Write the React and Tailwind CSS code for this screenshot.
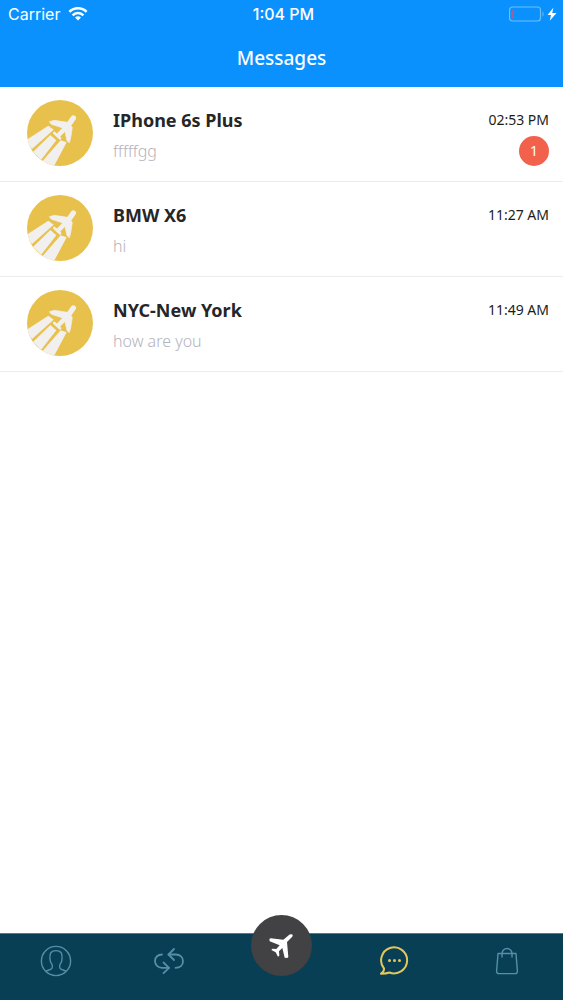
import React, { useState } from "react";

const CHATS = [
  { id: 1, title: "IPhone 6s Plus", text: "fffffgg", time: "02:53 PM", unread: 1 },
  { id: 2, title: "BMW X6", text: "hi", time: "11:27 AM", unread: 0 },
  { id: 3, title: "NYC-New York", text: "how are you", time: "11:49 AM", unread: 0 },
];

function WifiIcon() {
  return (
    <svg viewBox="0 0 20 14" className="w-5 h-3.5" fill="none" stroke="white" strokeWidth="2.6" aria-hidden="true">
      <path d="M1.4 4.800a12.200 12.200 0 0 1 17.200 0" />
      <path d="M4.600 8.300a7.600 7.600 0 0 1 10.800 0" />
      <path d="M10 13.600 7 10.600a4.300 4.300 0 0 1 6 0z" fill="white" stroke="none" />
    </svg>
  );
}

function BatteryIcon() {
  return (
    <svg viewBox="0 0 50 16" className="w-[50px] h-4" fill="none" aria-hidden="true">
      <rect x="0.5" y="1" width="31" height="14" rx="3" stroke="#6cc0f5" strokeWidth="1.2" />
      <path d="M33.500 5.500c1.400.5 1.400 4.500 0 5z" fill="#6cc0f5" />
      <rect x="2.500" y="3.500" width="2.500" height="9" rx="1" fill="#a0609c" />
      <path d="M44.500 1.500 38.500 9H42l-1.200 5.800L47.500 7H43.200z" fill="white" />
    </svg>
  );
}

function Avatar() {
  return (
    <svg viewBox="0 0 198 198" className="w-[66px] h-[66px] shrink-0 rounded-full bg-[#e8c04c]" aria-hidden="true">
      <g fill="#f1f0ee">
        <path d="M64 77 80 89 15 147 -6 122z" />
        <path d="M70 105 88 121 42 180 18 156z" />
        <path d="M101 121 119 127 78 204 46 184z" />
        <path d="M122 67 82 61 67 65 73 73 105 83 114 95 120 122 127 128 131 114 136 82z" stroke="#f1f0ee" strokeWidth="2" strokeLinejoin="round" />
      </g>
      <g fill="none" stroke="#f1f0ee" strokeLinecap="round">
        <path d="M139 54 126 73" strokeWidth="16" />
        <path d="M126 73 95 105" strokeWidth="14" />
        <path d="M82 99 99 115" strokeWidth="8" />
      </g>
    </svg>
  );
}

function ProfileIcon() {
  return (
    <svg viewBox="0 0 32 32" className="w-8 h-8" fill="none" stroke="currentColor" strokeWidth="1.4" aria-hidden="true">
      <circle cx="16" cy="16" r="14.6" />
      <path d="M5.500 26.400c2.400-1.300 5.800-1.600 6.600-3.400.6-1.400.3-2.800-.3-4-1.200-1.500-1.700-3-1.800-4.800C9.500 8.800 10.500 5.600 16 5.600s6.500 3.200 6 8.600c-.1 1.800-.6 3.300-1.800 4.800-.6 1.200-.9 2.600-.3 4 .8 1.800 4.200 2.100 6.600 3.400" />
    </svg>
  );
}

function ExchangeIcon() {
  return (
    <svg viewBox="0 0 32 28" className="w-8 h-7" fill="none" stroke="currentColor" strokeWidth="1.8" strokeLinecap="round" strokeLinejoin="round" aria-hidden="true">
      <path d="M9 7.500C5 7.500 2 10 2 14s3 6.800 7 6.800h7" />
      <path d="M10.500 15.500 16 20.800l-5.500 5.400" />
      <path d="M22.500 20.800c4.500 0 7.500-2.600 7.500-6.600s-3-6.700-7-6.700h-7.500" />
      <path d="M21 2l-5.500 5.500L21 13" />
    </svg>
  );
}

function PlaneIcon() {
  return (
    <svg viewBox="0 0 72 72" className="w-6 h-6" fill="white" aria-hidden="true">
      <path d="M68 1c4 1 4 5 1 8L54 24l4 45-3 3-8-1-7-29-10 10 1 13-4 3-7-13-13-7 3-4 12 1 10-11-30-12-1-7 4-2 38 4L60 3c3-3 5-3 8-2z" />
    </svg>
  );
}

function ChatIcon() {
  return (
    <svg viewBox="0 0 30 30" className="w-[30px] h-[30px]" fill="none" stroke="currentColor" strokeWidth="2" strokeLinejoin="round" aria-hidden="true">
      <path d="M5 22.500A13 13 0 1 1 10.500 26.500c-2.500.9-5 1.300-8.500 1.200 2-1.300 3.200-2.900 3-5.200z" />
      <g fill="currentColor" stroke="none">
        <circle cx="10.500" cy="14.500" r="1.500" />
        <circle cx="15.500" cy="14.500" r="1.500" />
        <circle cx="20.500" cy="14.500" r="1.500" />
      </g>
    </svg>
  );
}

function BagIcon() {
  return (
    <svg viewBox="0 0 24 30" className="w-6 h-[30px]" fill="none" stroke="currentColor" strokeWidth="1.4" strokeLinejoin="round" strokeLinecap="round" aria-hidden="true">
      <path d="M3 7.500h18l1.400 17.500c.1 1.800-.7 2.600-2.400 2.600H4c-1.700 0-2.500-.8-2.400-2.600z" />
      <path d="M7 11V7.500a5 5 0 0 1 10 0V11" />
    </svg>
  );
}

function StatusBar() {
  return (
    <div className="grid grid-cols-3 items-center h-7 pl-2 pr-1 font-['Inter',sans-serif] text-base">
      <div className="flex items-center gap-2">
        <span>Carrier</span>
        <WifiIcon />
      </div>
      <div className="text-center font-medium">1:04 PM</div>
      <div className="flex justify-end">
        <BatteryIcon />
      </div>
    </div>
  );
}

function ChatRow({ chat }) {
  return (
    <li className="border-b border-[#ececec]">
      <a href={`#chat-${chat.id}`} className="flex items-start h-[94px] pl-[27px] pr-3.5 pt-[13px]">
        <Avatar />
        <div className="flex-1 min-w-0 pl-5 pt-1">
          <h2 className="text-lg leading-8 font-bold text-[#262628] truncate">{chat.title}</h2>
          <p className="text-base leading-[30px] font-light text-[#b4b2ba] truncate">{chat.text}</p>
        </div>
        <div className="flex flex-col items-end pt-1 text-[#1c1c1c]">
          <time className="text-sm leading-8">{chat.time}</time>
          {chat.unread > 0 && (
            <span className="flex items-center justify-center w-[30px] h-[30px] rounded-full bg-[#f1614c] text-sm text-white">{chat.unread}</span>
          )}
        </div>
      </a>
    </li>
  );
}

function TabButton({ label, active, onClick, children }) {
  return (
    <button
      type="button"
      aria-label={label}
      aria-pressed={active}
      onClick={onClick}
      className={`flex items-center justify-center h-[54px] ${active ? "text-[#e3c65c]" : "text-[#5490a8]"}`}
    >
      {children}
    </button>
  );
}

export default function App() {
  const [tab, setTab] = useState("messages");

  return (
    <div className="flex flex-col min-h-screen bg-white font-['Noto_Sans',sans-serif]">
      <header className="h-[87px] bg-[#0a91fd] text-white">
        <StatusBar />
        <h1 className="text-center text-[19px] leading-[60px] font-medium">Messages</h1>
      </header>

      <main className="flex-1">
        <ul>
          {CHATS.map((c) => (
            <ChatRow key={c.id} chat={c} />
          ))}
        </ul>
      </main>

      <nav className="grid grid-cols-5 items-start h-[67px] bg-[#083f55] border-t border-[#4d7c8c]">
        <TabButton label="Profile" active={tab === "profile"} onClick={() => setTab("profile")}>
          <ProfileIcon />
        </TabButton>
        <TabButton label="Trips" active={tab === "trips"} onClick={() => setTab("trips")}>
          <ExchangeIcon />
        </TabButton>
        <button
          type="button"
          aria-label="New flight"
          onClick={() => setTab("flight")}
          className="flex items-center justify-center w-[61px] h-[61px] -mt-[19px] mx-auto rounded-full bg-[#424144]"
        >
          <PlaneIcon />
        </button>
        <TabButton label="Messages" active={tab === "messages"} onClick={() => setTab("messages")}>
          <ChatIcon />
        </TabButton>
        <TabButton label="Orders" active={tab === "orders"} onClick={() => setTab("orders")}>
          <BagIcon />
        </TabButton>
      </nav>
    </div>
  );
}
